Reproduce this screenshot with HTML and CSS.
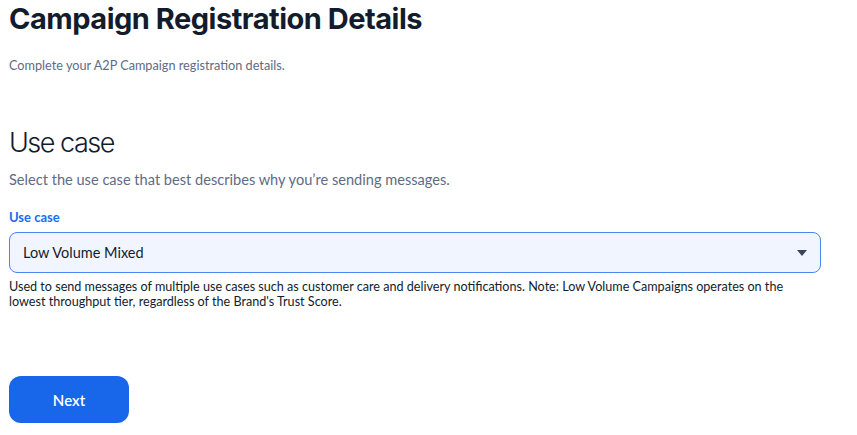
FILE: index.html
```html
<!DOCTYPE html>
<html lang="en">
<head>
    <meta charset="UTF-8">
    <meta name="viewport" content="width=device-width, initial-scale=1.0">
    <title>Campaign Registration Details</title>
    <link rel="stylesheet" href="styles.css">
</head>
<body>
    <div class="page">
        <h1 class="title">Campaign Registration Details</h1>
        <p class="subtitle">Complete your A2P Campaign registration details.</p>

        <h2 class="section-title">Use case</h2>
        <p class="section-desc">Select the use case that best describes why you’re sending messages.</p>

        <label class="field-label" for="usecase">Use case</label>
        <div class="select-wrap">
            <select class="select" id="usecase">
                <option>Low Volume Mixed</option>
            </select>
            <svg class="select-arrow" width="10" height="6" viewBox="0 0 10 6"><path d="M0 0h10L5 6z" fill="#3b4556"/></svg>
        </div>
        <p class="help-text">Used to send messages of multiple use cases such as customer care and delivery notifications. Note: Low Volume Campaigns operates on the lowest throughput tier, regardless of the Brand's Trust Score.</p>

        <button class="btn-primary">Next</button>
    </div>
</body>
</html>
```

FILE: styles.css
```css
body {
    margin: 0;
    padding: 0;
    background: #fff;
    font-family: Lato, "Open Sans", Arial, sans-serif;
    color: #121c2d;
}
.page {
    padding: 0 36px 0 9px;
}
.title {
    margin: 0;
    padding-top: 1px;
    font-family: Inter, sans-serif;
    font-weight: 700;
    font-size: 29px;
    line-height: 36px;
    letter-spacing: -0.5px;
    color: #121c2d;
}
.subtitle {
    margin: 18px 0 0;
    font-size: 12.7px;
    line-height: 20px;
    color: #606b85;
}
.section-title {
    margin: 50px 0 0;
    font-family: Inter, sans-serif;
    font-weight: 300;
    font-size: 27px;
    line-height: 36px;
    letter-spacing: -1.5px;
    color: #121c2d;
}
.section-desc {
    margin: 8px 0 0;
    font-size: 14.6px;
    line-height: 22px;
    color: #606b85;
}
.field-label {
    display: block;
    margin-top: 16px;
    font-size: 13px;
    font-weight: 700;
    line-height: 20px;
    color: #1a6cf0;
}
.select-wrap {
    position: relative;
    margin-top: 5px;
}
.select {
    display: block;
    width: 100%;
    height: 41px;
    padding: 0 40px 0 13px;
    border: 1px solid #4a85f0;
    border-radius: 8px;
    background: #f1f5ff;
    font-family: Lato, "Open Sans", Arial, sans-serif;
    font-size: 14.5px;
    color: #121c2d;
    appearance: none;
    box-sizing: border-box;
}
.select-arrow {
    position: absolute;
    right: 14px;
    top: 18px;
}
.help-text {
    margin: 6px 0 0;
    font-size: 12.6px;
    line-height: 15px;
    color: #121c2d;
}
.btn-primary {
    display: block;
    margin-top: 67px;
    width: 120px;
    height: 47px;
    border: none;
    border-radius: 12px;
    background: #1867ea;
    color: #fff;
    font-family: Lato, "Open Sans", Arial, sans-serif;
    font-size: 15px;
    font-weight: 600;
    cursor: pointer;
}
```
